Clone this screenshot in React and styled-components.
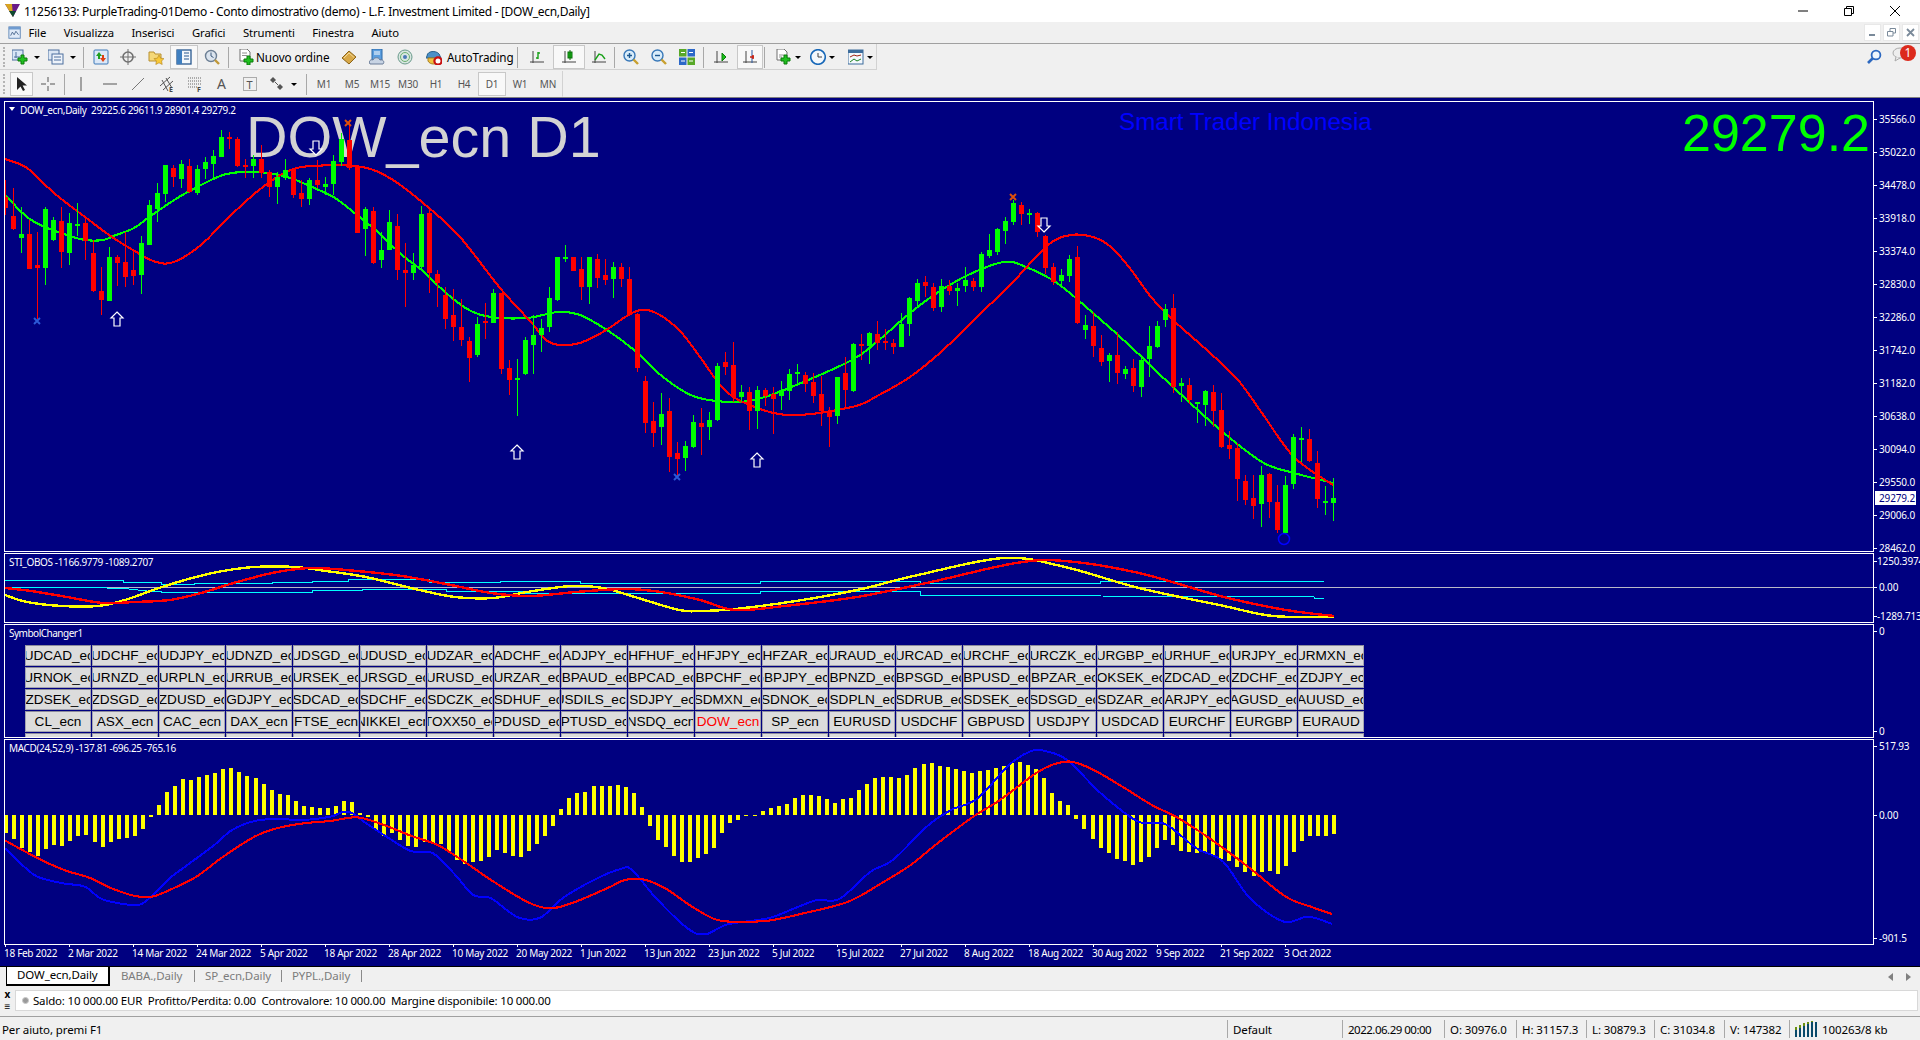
import React from 'react';
import styled, { createGlobalStyle } from 'styled-components';

const UI_FONT = '"Noto Sans", "Liberation Sans", sans-serif';
const NAVY = '#000080';

const GlobalStyle = createGlobalStyle`
  html, body { margin: 0; padding: 0; background: #f0f0f0; overflow: hidden; }
  body { font-family: ${UI_FONT}; font-size: 11px; color: #000; }
  * { box-sizing: border-box; }
`;

const Page = styled.div`
  width: 1920px;
  height: 1040px;
  display: flex;
  flex-direction: column;
  overflow: hidden;
`;

/* ---------- window chrome ---------- */

const TitleBar = styled.div`
  height: 22px;
  flex: none;
  background: #fff;
  display: flex;
  align-items: center;
  padding-left: 5px;
`;

const TitleText = styled.span`
  font-size: 12px;
  margin-left: 3px;
  white-space: nowrap;
  letter-spacing: -0.32px;
`;

const WindowButtons = styled.div`
  margin-left: auto;
  margin-right: 2px;
  display: flex;
  align-items: center;
  height: 100%;
`;

const WindowButton = styled.div`
  width: 46px;
  height: 100%;
  display: flex;
  align-items: center;
  justify-content: center;
`;

const MenuBar = styled.div`
  height: 22px;
  flex: none;
  display: flex;
  align-items: center;
  gap: 17.5px;
  padding-left: 8px;
  border-bottom: 1px solid #a0a0a0;
  background: #f0f0f0;
`;

const MenuIcon = styled.div`
  width: 14px;
  margin-right: -11px;
  display: flex;
`;

const MenuItem = styled.span`
  font-size: 11.3px;
  letter-spacing: -0.1px;
`;

const MdiButtons = styled.div`
  margin-left: auto;
  margin-right: 1px;
  display: flex;
  gap: 2px;
`;

const MdiButton = styled.div`
  width: 17px;
  height: 17px;
  background: #fff;
  border: 1px solid #e8e8e8;
  display: flex;
  align-items: center;
  justify-content: center;
`;

const ToolRow = styled.div`
  height: 27px;
  flex: none;
  display: flex;
  align-items: center;
  background: #f0f0f0;
  border-bottom: 1px solid ${p => p.$last ? '#808080' : 'transparent'};
`;

const ToolGroup = styled.div`
  height: 100%;
  display: flex;
  align-items: center;
  padding-top: 1px;
  border-right: 1px solid #d2d2d2;
  border-bottom: 1px solid ${p => p.$last ? 'transparent' : '#d2d2d2'};
`;

const Grip = styled.div`
  width: ${p => p.$w}px;
  height: 20px;
  flex: none;
  position: relative;
  &::before {
    content: '';
    position: absolute;
    left: 3px;
    top: 0;
    bottom: 0;
    border-left: 2px dotted #b4b4b4;
  }
`;

const ToolButton = styled.div`
  width: ${p => p.$w || 28}px;
  height: 24px;
  flex: none;
  display: flex;
  align-items: center;
  justify-content: ${p => p.$start ? 'flex-start' : 'center'};
  gap: ${p => p.$gap || 0}px;
  padding-left: ${p => p.$start ? p.$start : 0}px;
  border: 1px solid ${p => p.$active ? '#c8c8c8' : 'transparent'};
  background: ${p => p.$active ? '#f8f8f8' : 'transparent'};
  font-size: 11.7px;
  letter-spacing: -0.1px;
  white-space: nowrap;
`;

const ToolSep = styled.div`
  width: 1px;
  height: 21px;
  flex: none;
  background: #a8a8a8;
  margin: 0 ${p => p.$m ?? 2}px;
`;

const Caret = styled.span`
  width: 0;
  height: 0;
  flex: none;
  border-left: 3px solid transparent;
  border-right: 3px solid transparent;
  border-top: 3px solid #000;
  margin-left: ${p => p.$m || 6}px;
`;

const TimeframeLabel = styled.span`
  font-size: 10px;
  color: #555;
  letter-spacing: -0.2px;
`;

const RowEnd = styled.div`
  margin-left: auto;
  display: flex;
  align-items: center;
  gap: 10px;
  padding-right: 4px;
`;

const Bubble = styled.div`
  position: relative;
  width: 24px;
  height: 20px;
`;

const Badge = styled.span`
  position: absolute;
  right: 0;
  top: -2px;
  width: 16px;
  height: 16px;
  border-radius: 50%;
  background: #dc2a1c;
  color: #fff;
  font-size: 12px;
  line-height: 16px;
  text-align: center;
`;

/* ---------- chart ---------- */

const ChartArea = styled.div`
  height: 868px;
  flex: none;
  background: ${NAVY};
  padding: 3px 0 0 4px;
  color: #fff;
  font-family: "Noto Sans", sans-serif;
  font-size: 10px;
`;

const PaneRow = styled.div`
  display: flex;
  height: ${p => p.$h}px;
  margin-bottom: ${p => p.$gap ?? 1}px;
`;

const Pane = styled.div`
  width: 1870px;
  flex: none;
  height: 100%;
  position: relative;
  border: 1px solid #fff;
  overflow: hidden;
`;

const PlotSvg = styled.svg`
  position: absolute;
  inset: 0;
  width: 100%;
  height: 100%;
  display: block;
`;

const Legend = styled.div`
  position: absolute;
  left: ${p => p.$left || 4}px;
  top: 1px;
  line-height: 14px;
  white-space: pre;
  letter-spacing: -0.36px;
  z-index: 2;
`;

const LegendCaret = styled.span`
  position: absolute;
  left: 4px;
  top: 5px;
  width: 0;
  height: 0;
  border-left: 3px solid transparent;
  border-right: 3px solid transparent;
  border-top: 4px solid #fff;
  z-index: 2;
`;

const BigSymbol = styled.div`
  position: absolute;
  left: 241px;
  top: 3px;
  font-family: "Liberation Sans", Arial, sans-serif;
  font-size: 57.5px;
  line-height: 64px;
  color: #d3d3d3;
  white-space: nowrap;
`;

const Watermark = styled.div`
  position: absolute;
  left: 1114px;
  top: 6px;
  font-family: "Liberation Sans", Arial, sans-serif;
  font-size: 24.2px;
  line-height: 28px;
  color: #0000ff;
  white-space: nowrap;
`;

const BigPrice = styled.div`
  position: absolute;
  right: 3px;
  top: 1px;
  font-family: "Liberation Sans", Arial, sans-serif;
  font-size: 52px;
  line-height: 60px;
  color: #00ff00;
`;

const Axis = styled.div`
  flex: 1;
  min-width: 0;
  position: relative;
  overflow: hidden;
  padding-top: ${p => p.$pad || 0}px;
  display: flex;
  flex-direction: column;
`;

const AxisTick = styled.div`
  height: 14px;
  flex: none;
  line-height: 14px;
  padding-left: ${p => p.$indent ?? 5}px;
  margin-top: ${p => p.$gap || 0}px;
  position: relative;
  white-space: nowrap;
  letter-spacing: -0.15px;
  &::before {
    content: '';
    position: absolute;
    left: 0;
    top: 7px;
    width: 3px;
    height: 1px;
    background: #fff;
  }
`;

const PriceTag = styled.div`
  position: absolute;
  left: 1px;
  top: 390px;
  width: 41px;
  height: 14px;
  background: #fff;
  color: ${NAVY};
  line-height: 14px;
  padding-left: 4px;
  letter-spacing: -0.15px;
`;

const SymbolPane = styled(Pane)`
  padding-left: 20px;
`;

const PaneCaption = styled.div`
  height: 20px;
  line-height: 16px;
  margin-left: -16px;
  letter-spacing: -0.5px;
`;

const SymbolGrid = styled.div`
  display: grid;
  grid-template-columns: repeat(20, 66px);
  grid-auto-rows: 21px;
  gap: 1px;
`;

const SymbolButton = styled.div`
  background: #dcdcdc;
  border: 1px solid #a4a4b0;
  border-top-color: #8c8c9c;
  color: ${p => p.$current ? '#ff0000' : '#000'};
  font-family: "Liberation Sans", Arial, sans-serif;
  font-size: 13.6px;
  display: flex;
  align-items: center;
  justify-content: center;
  white-space: nowrap;
  overflow: hidden;
`;

const TimeAxis = styled.div`
  height: 21px;
  display: flex;
  letter-spacing: -0.3px;
`;

const TimeLabel = styled.div`
  width: 64px;
  flex: none;
  position: relative;
  padding-top: 1px;
  line-height: 14px;
  white-space: nowrap;
  &::before {
    content: '';
    position: absolute;
    left: 1px;
    top: -1px;
    width: 1px;
    height: 3px;
    background: #fff;
  }
`;

/* ---------- bottom bars ---------- */

const TabBar = styled.div`
  height: 20px;
  flex: none;
  display: flex;
  align-items: stretch;
  border-top: 1px solid #000;
  padding-left: 6px;
`;

const Tab = styled.div`
  display: flex;
  align-items: center;
  width: ${p => p.$w}px;
  padding-left: ${p => p.$pad}px;
  padding-bottom: 2px;
  font-size: 11.5px;
  letter-spacing: -0.1px;
  color: ${p => p.$active ? '#000' : '#7c7c7c'};
  background: ${p => p.$active ? '#fff' : 'transparent'};
  ${p => p.$active
    ? 'border: 1px solid #000; border-top: none; border-right-width: 2px; border-bottom-width: 2px;'
    : ''}
  &:not(:first-child) { position: relative; }
  ${p => p.$active ? '' : `&::after {
    content: '';
    position: absolute;
    right: 0;
    top: 3px;
    bottom: 4px;
    width: 1px;
    background: #8a8a8a;
  }`}
`;

const TabArrows = styled.div`
  margin-left: auto;
  display: flex;
  align-items: center;
  gap: 13px;
  padding-right: 9px;
`;

const TradeBar = styled.div`
  height: 31px;
  flex: none;
  display: flex;
  align-items: center;
  padding: 0 2px 2px 0;
  border-bottom: 1px solid #a0a0a0;
`;

const TradeHandle = styled.div`
  width: 15px;
  flex: none;
  text-align: center;
  font-size: 10px;
  font-weight: 700;
  line-height: 12px;
`;

const TradeBox = styled.div`
  flex: 1;
  height: 21px;
  background: #fff;
  border: 1px solid #d8d8d8;
  display: flex;
  align-items: center;
  gap: 4px;
  padding-left: 6px;
  font-size: 11.5px;
  letter-spacing: -0.19px;
  white-space: pre;
`;

const TradeDot = styled.span`
  width: 7px;
  height: 7px;
  border-radius: 50%;
  background: #9a9a9a;
  border: 1px solid #c8c8c8;
`;

const StatusBar = styled.div`
  flex: 1;
  display: flex;
  align-items: stretch;
  padding: 3px 0 2px 2px;
  font-size: 11.5px;
  letter-spacing: -0.1px;
`;

const StatusHelp = styled.div`
  margin-right: auto;
  display: flex;
  align-items: center;
`;

const StatusCell = styled.div`
  width: ${p => p.$w}px;
  flex: none;
  display: flex;
  align-items: center;
  gap: 4px;
  padding-left: 5px;
  border-left: 1px solid #a8a8a8;
  white-space: nowrap;
  letter-spacing: ${p => p.$tight ? '-0.5px' : 'inherit'};
`;

const Glyph = styled.svg`
  display: block;
  flex: none;
`;

/* ---------- chart data (read off the picture) ---------- */

// [colour, wick top, body top, body bottom, wick bottom] in 1/3 px from a reference row
const CANDLES_A = [
  ['r',240,290,325,345],['r',265,348,387,390],['g',320,402,413,458],['r',360,402,507,508],['r',395,496,503,655],
  ['g',322,328,503,555],['g',350,360,420,422],['r',322,364,456,505],['g',340,370,458,495],['g',310,372,375,408],
  ['r',358,368,422,480],['r',420,460,573,575],['r',500,574,600,645],['g',440,472,603,603],['r',465,472,488,558],
  ['r',395,487,530,560],['r',455,510,527,555],['g',408,430,524,582],['g',300,316,434,435],['g',250,280,326,368],
  ['g',195,196,282,305],['r',195,204,230,260],['g',180,192,236,265],['r',178,198,276,280],['g',195,208,280,285],
  ['g',170,186,206,235],['g',150,168,192,235],['g',90,111,170,170],['r',95,112,118,145],['r',110,118,197,200],
  ['r',178,195,200,235],['g',165,178,198,235],['r',135,178,218,235],['r',210,216,260,292],['g',215,232,260,310],
  ['g',178,210,235,240],['r',205,208,285,295],['r',240,280,297,320],['g',235,240,297,315],['r',180,240,255,265],
  ['g',230,252,262,285],['g',165,184,252,285],['g',100,118,186,200],['r',60,120,205,210],['r',198,198,398,400],
  ['g',322,328,388,468],['r',320,334,490,490],['g',395,450,480,502],['g',330,366,450,450],['r',342,378,510,540],
  ['r',430,510,518,622],['g',460,495,518,542],['g',318,342,502,510],['r',325,340,518,580],['r',510,522,550,620],
  ['r',560,585,656,685],['r',568,646,680,725],['r',598,682,720,740],['r',710,724,773,845],['g',650,672,765,770],
  ['r',610,663,668,718],['g',568,580,668,668],['r',578,578,806,820],['r',780,805,840,885],['g',778,834,838,950],
  ['g',710,720,822,825],['g',645,706,735,822],['g',657,684,705,755],['g',562,595,680,698],['g',472,472,600,605],
  ['g',435,471,476,485],['r',470,472,512,512],['r',470,508,560,600],['g',472,472,560,612],['r',462,476,535,565],
  ['r',478,526,540,555],['g',485,502,536,592],['r',490,502,536,562],['r',502,538,645,648],['r',640,642,803,818],
  ['r',828,844,968,998],['r',906,963,999,1041],['g',879,942,981,1035],['r',894,933,1071,1116],
];

const CANDLES_B = [
  ['r',786,819,837,891],['g',783,798,834,873],['g',705,726,801,804],['r',685,730,740,825],['g',695,720,740,780],
  ['g',550,558,720,725],['r',517,545,560,585],['r',485,555,650,665],['g',615,636,652,665],['r',620,636,692,750],
  ['g',618,630,692,748],['r',625,630,648,680],['r',620,642,656,762],['g',603,630,648,690],['g',568,582,632,662],
  ['g',552,576,583,612],['r',576,586,612,635],['r',580,606,648,670],['r',588,642,692,738],['r',682,695,710,803],
  ['g',590,592,708,730],['r',530,580,630,680],['g',488,492,633,635],['r',462,491,497,540],['g',455,458,498,550],
  ['r',424,462,488,512],['r',448,484,487,512],['r',478,490,500,522],['g',400,432,502,502],['g',350,354,432,468],
  ['g',297,309,363,378],['r',288,306,318,350],['r',310,321,384,395],['g',297,318,382,395],['r',300,318,333,345],
  ['g',310,324,332,378],['g',262,300,318,338],['r',295,303,321,335],['g',216,222,321,335],['g',162,210,228,235],
  ['g',145,147,216,225],['g',110,123,153,192],['g',60,69,126,135],['r',66,75,102,135],['g',88,99,105,132],
  ['r',96,99,156,170],['r',165,168,264,282],['r',250,261,305,315],['g',268,285,303,320],['g',225,237,288,305],
  ['r',198,231,429,432],['g',405,435,450,476],['r',396,438,498,530],['r',465,504,546,558],['g',520,525,543,606],
  ['r',456,525,579,612],['g',558,567,582,596],['r',538,564,618,636],['g',528,540,621,650],['g',438,498,537,590],
  ['g',423,438,501,505],['g',372,387,420,440],['r',342,384,621,640],['g',595,609,618,668],['r',594,615,660,672],
  ['g',666,666,670,728],['g',630,633,675,738],['r',615,636,693,742],['r',640,690,801,806],['r',752,796,808,835],
  ['r',790,804,897,965],['r',885,903,960,975],['r',885,954,978,1018],['g',858,885,972,1040],['r',878,882,966,1012],
  ['r',915,966,1050,1060],['g',888,915,1060,1062],['g',762,771,912,926],['g',741,774,777,845],['r',748,777,843,848],
  ['r',813,849,957,984],['g',918,964,968,1005],['g',895,954,968,1025],
];

const toCandle = base => ([c, a, b, d, e]) => [c, base + a / 3, base + b / 3, base + d / 3, base + e / 3];
const CANDLES = [...CANDLES_A.map(toCandle(100)), ...CANDLES_B.map(toCandle(180))];

const MA_FAST = [
  [5,195],[27,217],[45,227],[67,235],[85,240],[103,240],[116,235],[134,228],[152,215],[179,197],[201,185],[223,175],
  [243,172],[268,173],[290,178],[312,187],[335,198],[357,215],[379,233],[402,255],[424,272],[446,293],[469,310],
  [491,317],[527,318],[558,312],[580,315],[607,330],[634,350],[663,377],[693,396],[727,402],[754,400],[789,388],
  [852,360],[879,340],[910,313],[937,293],[968,275],[1004,262],[1026,267],[1057,283],[1093,313],[1129,345],
  [1173,387],[1218,428],[1262,462],[1294,473],[1333,483],
];

const MA_SLOW = [
  [5,159],[27,168],[54,193],[85,217],[112,237],[138,253],[156,262],[174,262],[201,245],[228,218],[259,190],[286,172],
  [312,166],[362,167],[393,180],[429,208],[460,237],[500,288],[531,322],[549,342],[576,344],[603,332],[634,312],
  [654,312],[679,330],[700,357],[722,387],[745,403],[789,415],[852,407],[879,395],[910,377],[941,352],[977,317],
  [1012,283],[1048,245],[1071,235],[1093,237],[1111,247],[1129,267],[1151,297],[1173,320],[1209,352],[1238,380],
  [1262,413],[1294,457],[1333,485],
];

const STI_FAST = [
  [5,595],[27,602],[62,606],[98,606],[125,600],[156,589],[192,578],[223,571],[254,567],[295,567],[326,571],[366,577],
  [415,589],[455,597],[493,598],[527,592],[571,586],[603,588],[638,598],[679,610],[700,611],[735,609],[796,601],
  [857,590],[918,575],[1004,558],[1065,567],[1139,588],[1224,606],[1273,616],[1334,617],
];

const STI_SLOW = [
  [5,588],[31,591],[67,597],[103,603],[134,602],[170,600],[201,593],[237,582],[277,572],[312,568],[357,571],[402,576],
  [446,584],[491,593],[531,596],[576,592],[625,589],[661,592],[700,600],[735,610],[784,606],[857,597],[931,582],
  [1016,563],[1065,561],[1139,573],[1224,597],[1286,610],[1334,616],
];

const STI_BAND_HIGH = '5,580 123,580 123,582 161,582 161,584 194,584 194,583 272,583 272,582 312,582 312,581 348,581 348,579 429,579 429,582 500,582 500,581 580,581 580,583 760,583 760,581 920,581 920,583 1100,583 1100,581 1324,581';
const STI_BAND_LOW = '5,587 83,587 107,588 120,588 147,591 161,591 161,592 312,592 312,590 362,590 362,589 446,589 446,591 522,591 522,593 760,593 760,591 920,591 920,595 1100,595 1100,596 1314,597 1314,598 1324,598';

// MACD histogram tips, 1/3 px below y=745; zero line is at 210
const MACD_BARS = [
  265,283,310,320,332,312,300,303,287,272,270,292,306,292,282,280,272,252,215,180,140,122,102,105,95,90,85,72,69,82,92,
  100,116,135,147,150,168,183,185,188,190,182,168,170,205,215,255,272,265,285,302,305,290,295,297,320,345,358,352,348,
  335,315,325,332,335,318,297,272,243,193,160,143,140,122,122,122,120,125,143,185,243,285,305,332,352,352,340,327,308,
  265,235,225,212,212,197,188,183,177,160,150,149,153,162,175,162,160,135,116,100,96,96,98,90,70,58,55,62,65,72,78,85,
  78,76,70,62,55,52,60,72,100,145,168,180,222,252,282,308,325,342,348,360,352,335,310,285,300,317,320,323,325,330,342,
  348,365,380,392,380,378,387,363,322,288,272,272,272,268,
];

const MACD_SIGNAL = [
  [6,287],[25,315],[50,350],[75,378],[100,398],[125,430],[150,452],[170,455],[190,435],[220,395],[250,335],[285,275],
  [310,250],[340,235],[370,228],[400,217],[430,240],[460,272],[490,300],[520,350],[550,405],[590,470],[615,490],
  [640,475],[680,430],[700,405],[720,403],[745,430],[775,485],[800,522],[820,530],[860,527],[900,505],[950,470],
  [990,410],[1020,360],[1050,295],[1090,215],[1120,165],[1160,85],[1180,58],[1200,50],[1225,75],[1260,130],[1290,180],
  [1320,220],[1360,290],[1400,370],[1440,455],[1470,487],[1492,507],
];

const MACD_MAIN = [
  [6,310],[25,360],[42,395],[70,415],[95,425],[115,463],[150,480],[165,465],[190,400],[210,360],[240,300],[260,255],
  [285,228],[310,222],[340,225],[370,215],[385,200],[395,205],[410,235],[430,270],[460,318],[485,325],[510,390],
  [530,450],[550,460],[580,517],[605,518],[630,460],[665,405],[695,372],[708,375],[735,460],[770,550],[790,568],
  [815,538],[860,520],[890,490],[915,465],[940,462],[975,380],[1000,345],[1040,240],[1065,195],[1095,160],[1130,60],
  [1155,18],[1170,18],[1195,45],[1235,150],[1275,230],[1305,237],[1340,310],[1370,350],[1400,460],[1438,530],
  [1465,515],[1492,537],
];

const macdPoint = ([x, y]) => [x / 1.12, 745 + y / 3];

const PRICE_TICKS = ['35566.0','35022.0','34478.0','33918.0','33374.0','32830.0','32286.0','31742.0','31182.0','30638.0','30094.0','29550.0','29006.0','28462.0'];

const DATES = ['18 Feb 2022','2 Mar 2022','14 Mar 2022','24 Mar 2022','5 Apr 2022','18 Apr 2022','28 Apr 2022','10 May 2022','20 May 2022','1 Jun 2022','13 Jun 2022','23 Jun 2022','5 Jul 2022','15 Jul 2022','27 Jul 2022','8 Aug 2022','18 Aug 2022','30 Aug 2022','9 Sep 2022','21 Sep 2022','3 Oct 2022'];

const withEcn = list => list.split(' ').map(s => `${s}_ecn`);
const SYMBOLS = [
  ...withEcn('AUDCAD AUDCHF AUDJPY AUDNZD AUDSGD AUDUSD AUDZAR CADCHF CADJPY CHFHUF CHFJPY CHFZAR EURAUD EURCAD EURCHF EURCZK EURGBP EURHUF EURJPY EURMXN'),
  ...withEcn('EURNOK EURNZD EURPLN EURRUB EURSEK EURSGD EURUSD EURZAR GBPAUD GBPCAD GBPCHF GBPJPY GBPNZD GBPSGD GBPUSD GBPZAR NOKSEK NZDCAD NZDCHF NZDJPY'),
  ...withEcn('NZDSEK NZDSGD NZDUSD SGDJPY USDCAD USDCHF USDCZK USDHUF USDILS USDJPY USDMXN USDNOK USDPLN USDRUB USDSEK USDSGD USDZAR ZARJPY XAGUSD XAUUSD'),
  ...withEcn('CL ASX CAC DAX FTSE NIKKEI STOXX50 XPDUSD XPTUSD NSDQ DOW SP'),
  'EURUSD','USDCHF','GBPUSD','USDJPY','USDCAD','EURCHF','EURGBP','EURAUD',
  ...Array(20).fill(''),
];

// smooth path through points (Catmull-Rom)
function smooth(points) {
  let d = `M${points[0][0]} ${points[0][1]}`;
  for (let i = 0; i < points.length - 1; i++) {
    const p0 = points[i - 1] || points[i];
    const p1 = points[i];
    const p2 = points[i + 1];
    const p3 = points[i + 2] || p2;
    const c1x = p1[0] + (p2[0] - p0[0]) / 6;
    const c1y = p1[1] + (p2[1] - p0[1]) / 6;
    const c2x = p2[0] - (p3[0] - p1[0]) / 6;
    const c2y = p2[1] - (p3[1] - p1[1]) / 6;
    d += `C${c1x.toFixed(1)} ${c1y.toFixed(1)} ${c2x.toFixed(1)} ${c2y.toFixed(1)} ${p2[0].toFixed(1)} ${p2[1].toFixed(1)}`;
  }
  return d;
}

const Curve = ({ points, color, width = 2.1 }) => (
  <path d={smooth(points)} fill="none" stroke={color} strokeWidth={width} shapeRendering="crispEdges" />
);

const Arrow = ({ x, y, down }) => (
  <path
    transform={`translate(${x} ${y})${down ? ' scale(1 -1)' : ''}`}
    d="M0 -7L6 -1H3V7H-3V-1H-6Z"
    fill={NAVY}
    stroke="#fff"
    strokeWidth="1.2"
  />
);

const Cross = ({ x, y, color }) => (
  <path d={`M${x - 3} ${y - 3}L${x + 3} ${y + 3}M${x + 3} ${y - 3}L${x - 3} ${y + 3}`} stroke={color} strokeWidth="1.9" fill="none" />
);

const PriceChart = () => (
  <PlotSvg viewBox="5 102 1868 449">
    <Curve points={MA_FAST} color="#00ff00" />
    <Curve points={MA_SLOW} color="#ff0000" />
    {CANDLES.map(([c, a, b, d, e], k) => {
      const color = c === 'g' ? '#00ff00' : '#ff0000';
      const top = Math.round(b);
      return (
        <g key={k} fill={color} shapeRendering="crispEdges">
          <rect x={5 + k * 8} y={Math.round(a)} width="1" height={Math.max(1, Math.round(e - a))} />
          <rect x={3 + k * 8} y={top} width="5" height={Math.max(2, Math.round(d) - top)} />
        </g>
      );
    })}
    <Arrow x={117} y={319} />
    <Arrow x={517} y={452} />
    <Arrow x={757} y={460} />
    <Arrow x={1044} y={225} down />
    <Arrow x={316} y={148} down />
    <Cross x={37} y={321} color="#2c5ad8" />
    <Cross x={677} y={477} color="#2c5ad8" />
    <Cross x={1013} y={197} color="#e0500a" />
    <Cross x={348} y={123} color="#e0500a" />
    <circle cx={1284} cy={539} r="5.5" fill="none" stroke="#0000ff" strokeWidth="1.5" />
  </PlotSvg>
);

const StiChart = () => (
  <PlotSvg viewBox="5 554 1868 68">
    <rect x="5" y="587" width="1868" height="1" fill="#b8b8c8" />
    <polyline points={STI_BAND_HIGH} fill="none" stroke="#00ffff" strokeWidth="1" shapeRendering="crispEdges" />
    <polyline points={STI_BAND_LOW} fill="none" stroke="#00ffff" strokeWidth="1" shapeRendering="crispEdges" />
    <Curve points={STI_FAST} color="#ffff00" width={2.4} />
    <Curve points={STI_SLOW} color="#ff0000" width={2.4} />
  </PlotSvg>
);

const MacdChart = () => (
  <PlotSvg viewBox="5 740 1868 204">
    {MACD_BARS.map((tip, k) => {
      const y = 745 + tip / 3;
      const x = Math.round(4 + k * (1328 / (MACD_BARS.length - 1)));
      return <rect key={k} x={x} y={Math.min(y, 815)} width="4" height={Math.max(1, Math.abs(y - 815))} fill="#ffff00" shapeRendering="crispEdges" />;
    })}
    <Curve points={MACD_MAIN.map(macdPoint)} color="#0000ff" width={2} />
    <Curve points={MACD_SIGNAL.map(macdPoint)} color="#ff0000" />
  </PlotSvg>
);

/* ---------- toolbar icons ---------- */

const Axes = () => <path d="M4 2V14M1 13H15" stroke="#444" fill="none" />;

const icons = {
  appLogo: <><path d="M0 1H15L8 14Z" fill="#6a1b8a" /><path d="M0 1H7L8 14Z" fill="#d9a520" /><path d="M4 8L8 14L11 8Z" fill="#0e4a30" /></>,
  menuDoc: <><rect x="1" y="1" width="13" height="13" fill="#dfeaf8" stroke="#5b83b5" /><rect x="1" y="1" width="13" height="3" fill="#6f9bd0" /><path d="M3 11L5 7L7 10L9 6L12 10" stroke="#45628a" fill="none" /></>,
  chartPlus: <><rect x="0" y="1" width="11" height="10" fill="#d8e6f6" stroke="#4c6f9e" /><path d="M2 8H8M4 3V9" stroke="#4c6f9e" /><path d="M9 6H12V9H15V12H12V15H9V12H6V9H9Z" fill="#20c020" stroke="#0a7a0a" /></>,
  profiles: <><rect x="0" y="1" width="11" height="10" fill="#dbe6f4" stroke="#4c6f9e" /><rect x="4" y="5" width="11" height="10" fill="#eef3fa" stroke="#4c6f9e" /><path d="M6 8H13M6 11H13" stroke="#4c6f9e" /></>,
  market: <><rect x="1" y="1" width="14" height="14" rx="1" fill="#dbe8f8" stroke="#3c78b8" /><path d="M6 3L9 7H7V10H5V7H3Z" fill="#20a020" /><path d="M10 13L7 9H9V6H11V9H13Z" fill="#e04010" /></>,
  crosshair: <><circle cx="8" cy="8" r="5" fill="none" stroke="#707070" strokeWidth="1.6" /><path d="M8 0V16M0 8H16" stroke="#707070" /></>,
  favorites: <><path d="M1 3H6L7 5H13V12H1Z" fill="#f5d878" stroke="#b89030" /><path d="M11 6L12.6 9.2L16 9.6L13.6 12L14.2 15.5L11 13.8L7.8 15.5L8.4 12L6 9.6L9.4 9.2Z" fill="#f8c838" stroke="#b08018" strokeWidth=".6" /></>,
  panel: <><rect x="1" y="1" width="14" height="14" fill="#f4f8fc" stroke="#28588f" strokeWidth="1.3" /><rect x="1" y="1" width="5" height="14" fill="#3f7fc0" /><path d="M8 4H13M8 7H13M8 10H13" stroke="#28588f" /></>,
  tester: <><circle cx="7" cy="7" r="5.5" fill="#dbe4ee" stroke="#6c7f94" strokeWidth="1.4" /><path d="M7 3.5V7L9.5 8.5" stroke="#3c5a7c" fill="none" /><path d="M11 11L15 15" stroke="#c09838" strokeWidth="2.4" /></>,
  newOrder: <><path d="M2 0H9L12 3V12H2Z" fill="#fff" stroke="#707070" /><path d="M4 4H9M4 6.5H9" stroke="#909090" /><path d="M9 7H12V10H15V13H12V16H9V13H6V10H9Z" fill="#20c020" stroke="#0a7a0a" /></>,
  book: <><path d="M1 9L8 2L15 8L8 15Z" fill="#d8a848" stroke="#8c6418" /><path d="M3 9L8 4L13 8.4" stroke="#f0d898" fill="none" /></>,
  cloudDoc: <><rect x="3" y="0" width="10" height="11" fill="#5c9ede" stroke="#2a68a8" /><path d="M5 3H11M5 5H11" stroke="#fff" /><path d="M1 15C-1 12 2 10 4 11C5 8 10 8 11 11C14 10 16 13 14 15Z" fill="#c8d4e4" stroke="#6a7c98" /></>,
  signal: <><circle cx="8" cy="8" r="7" fill="#d8e6e0" stroke="#6a9a8c" /><circle cx="8" cy="8" r="4.5" fill="none" stroke="#6ab070" /><circle cx="8" cy="8" r="2" fill="#4a78b8" /></>,
  autoTrade: <><path d="M1 7C1 1 13 1 14 7L15 9H0Z" fill="#4a90c8" stroke="#28608c" /><path d="M2 9H13V12C11 16 4 16 2 12Z" fill="#f0c040" stroke="#a88020" /><circle cx="12" cy="12" r="3.6" fill="#fff" stroke="#c81010" strokeWidth="2.2" /></>,
  bars: <><Axes /><path d="M9 3V10M7 9H9M9 4H11" stroke="#18a018" fill="none" strokeWidth="1.4" /></>,
  candles: <><Axes /><rect x="7" y="3" width="4" height="6" fill="#18c018" stroke="#0a6a0a" /><path d="M9 1V11" stroke="#0a6a0a" /></>,
  line: <><Axes /><path d="M4 11L8 5L11 6L14 10" stroke="#18a018" fill="none" strokeWidth="1.4" /></>,
  zoomIn: <><circle cx="6.5" cy="6.5" r="5.5" fill="#d8ecfa" stroke="#3878b8" strokeWidth="1.4" /><path d="M4 6.5H9M6.5 4V9" stroke="#1c5890" strokeWidth="1.4" /><path d="M10.5 10.5L15 15" stroke="#c8a030" strokeWidth="2.4" /></>,
  zoomOut: <><circle cx="6.5" cy="6.5" r="5.5" fill="#d8ecfa" stroke="#3878b8" strokeWidth="1.4" /><path d="M4 6.5H9" stroke="#1c5890" strokeWidth="1.4" /><path d="M10.5 10.5L15 15" stroke="#c8a030" strokeWidth="2.4" /></>,
  tile: <><rect x="0" y="0" width="7.5" height="7.5" fill="#58a828" /><rect x="8.5" y="0" width="7.5" height="7.5" fill="#2c68c8" /><rect x="0" y="8.5" width="7.5" height="7.5" fill="#2c68c8" /><rect x="8.5" y="8.5" width="7.5" height="7.5" fill="#58a828" /><path d="M2 3.5H6M10 3.5H14M2 12H6M10 12H14" stroke="#fff" /></>,
  scroll: <><Axes /><path d="M9 4L13 8L9 12Z" fill="#18c018" stroke="#0a7a0a" /></>,
  shift: <><Axes /><path d="M10 1V14" stroke="#2858a0" /><path d="M12 8H8M11 6V10" stroke="#c82010" strokeWidth="1.6" /></>,
  addInd: <><path d="M1 0H8L11 3V11H1Z" fill="#fff" stroke="#707070" /><path d="M3 6H8M3 8H6" stroke="#909090" /><path d="M8 6H11V9H14V12H11V15H8V12H5V9H8Z" fill="#20c020" stroke="#0a7a0a" /></>,
  clock: <><circle cx="8" cy="8" r="7.3" fill="#f4f8fc" stroke="#1868b8" strokeWidth="1.6" /><path d="M8 4V8H12" stroke="#404040" fill="none" /></>,
  template: <><rect x="0" y="1" width="15" height="14" fill="#f4f8fc" stroke="#3c6c9c" /><rect x="0" y="1" width="15" height="3" fill="#3c6c9c" /><path d="M2 8L6 6L9 7L13 6" stroke="#a02010" fill="none" /><path d="M2 13L6 10L9 12L13 10" stroke="#188020" fill="none" /></>,
  search: <><circle cx="10" cy="6" r="4.4" fill="#eef5fc" stroke="#2c68c0" strokeWidth="1.8" /><path d="M7 9L2 14" stroke="#2c68c0" strokeWidth="2.6" /></>,
  chat: <><ellipse cx="8" cy="6" rx="7" ry="5" fill="#eee" stroke="#aaa" /><path d="M4 10L3 14L8 11" fill="#eee" stroke="#aaa" /></>,
  cursor: <path d="M3 1V14L6.5 10.5L9 15L11 14L8.6 9.6H13Z" fill="#222" />,
  cross: <path d="M8 1V6M8 10V15M1 8H6M10 8H15" stroke="#555" />,
  vline: <path d="M8 1V15" stroke="#555" />,
  hline: <path d="M1 8H15" stroke="#555" />,
  trend: <path d="M2 14L14 2" stroke="#777" />,
  channel: <><path d="M1 10L11 1M4 14L14 5M3 4L9 15M7 2L13 12" stroke="#555" /><text x="10" y="16" fontSize="7" fontWeight="700" fill="#444">E</text></>,
  fibo: <><path d="M1 2H14M1 5H14M1 8H14M1 11H11" stroke="#666" strokeDasharray="1 1" /><text x="10" y="16" fontSize="7" fontWeight="700" fill="#444">F</text></>,
  labelA: <text x="3" y="13" fontSize="14" fill="#555">A</text>,
  labelT: <><rect x="1.5" y="1.5" width="13" height="13" fill="none" stroke="#666" strokeDasharray="1 1" /><text x="4.5" y="12.5" fontSize="11" fill="#555">T</text></>,
  arrows: <><path d="M4 1L7 4L4 7L1 4Z" fill="#555" /><path d="M11 8L14 11L11 14L8 11Z" fill="#555" /><path d="M6 6L9 9" stroke="#555" /></>,
  barsStatus: <><path d="M1 9V16M5 7V16M9 5V16M13 3V16M17 1V16M21 1V16" stroke="#0a4a6a" strokeWidth="2" /><path d="M1 6V9M5 4V7M9 2V5M13 1V3M17 0V1" stroke="#6a9010" strokeWidth="2" /></>,
};

const Icon = ({ name, size = 16, w }) => (
  <Glyph width={w || size} height={size} viewBox={w ? `0 0 ${w} ${size}` : '0 0 16 16'}>{icons[name]}</Glyph>
);

const timeframes = ['M1', 'M5', 'M15', 'M30', 'H1', 'H4', 'D1', 'W1', 'MN'];
const drawTools = [['cross', 30], null, ['vline', 30], ['hline', 28], ['trend', 28], ['channel', 29], ['fibo', 27], ['labelA', 27], ['labelT', 29]];

export default function App() {
  return (
    <Page>
      <GlobalStyle />

      <TitleBar>
        <Icon name="appLogo" />
        <TitleText>11256133: PurpleTrading-01Demo - Conto dimostrativo (demo) - L.F. Investment Limited - [DOW_ecn,Daily]</TitleText>
        <WindowButtons>
          <WindowButton><Glyph width="12" height="12" viewBox="0 0 12 12"><path d="M1 6H11" stroke="#000" /></Glyph></WindowButton>
          <WindowButton><Glyph width="12" height="12" viewBox="0 0 12 12"><path d="M1.5 3.5H8.5V10.5H1.5ZM3.5 3V1.5H10.5V8.5H9" fill="none" stroke="#000" /></Glyph></WindowButton>
          <WindowButton><Glyph width="12" height="12" viewBox="0 0 12 12"><path d="M1 1L11 11M11 1L1 11" stroke="#000" /></Glyph></WindowButton>
        </WindowButtons>
      </TitleBar>

      <MenuBar>
        <MenuIcon><Icon name="menuDoc" size={14} /></MenuIcon>
        {['File', 'Visualizza', 'Inserisci', 'Grafici', 'Strumenti', 'Finestra', 'Aiuto'].map(m => (
          <MenuItem key={m}>{m}</MenuItem>
        ))}
        <MdiButtons>
          <MdiButton><Glyph width="9" height="9" viewBox="0 0 9 9"><path d="M1 7H7" stroke="#7a8a9a" strokeWidth="2" /></Glyph></MdiButton>
          <MdiButton><Glyph width="9" height="9" viewBox="0 0 9 9"><path d="M.5 3.5H6V8H.5ZM3 3V.5H8.5V5H6" fill="none" stroke="#7a8a9a" /></Glyph></MdiButton>
          <MdiButton><Glyph width="9" height="9" viewBox="0 0 9 9"><path d="M1 1L8 8M8 1L1 8" stroke="#7a8a9a" strokeWidth="1.8" /></Glyph></MdiButton>
        </MdiButtons>
      </MenuBar>

      <ToolRow>
        <ToolGroup>
          <Grip $w={8} />
          <ToolButton $w={36} $start={3}><Icon name="chartPlus" /><Caret /></ToolButton>
          <ToolButton $w={36} $start={3}><Icon name="profiles" /><Caret /></ToolButton>
          <ToolSep $m={3} />
          <ToolButton $w={27}><Icon name="market" /></ToolButton>
          <ToolButton><Icon name="crosshair" /></ToolButton>
          <ToolButton><Icon name="favorites" /></ToolButton>
          <ToolButton $active><Icon name="panel" /></ToolButton>
          <ToolButton><Icon name="tester" /></ToolButton>
          <ToolSep $m={2} />
          <ToolButton $w={104} $start={6} $gap={2}><Icon name="newOrder" />Nuovo ordine</ToolButton>
          <ToolButton><Icon name="book" /></ToolButton>
          <ToolButton><Icon name="cloudDoc" /></ToolButton>
          <ToolButton><Icon name="signal" /></ToolButton>
          <ToolButton $w={95} $start={6} $gap={5}><Icon name="autoTrade" />AutoTrading</ToolButton>
          <ToolSep $m={3} />
          <ToolButton $w={32}><Icon name="bars" /></ToolButton>
          <ToolButton $w={32} $active><Icon name="candles" /></ToolButton>
          <ToolButton $w={28}><Icon name="line" /></ToolButton>
          <ToolSep $m={1} />
          <ToolButton $w={30}><Icon name="zoomIn" /></ToolButton>
          <ToolButton $w={26}><Icon name="zoomOut" /></ToolButton>
          <ToolButton $w={30}><Icon name="tile" /></ToolButton>
          <ToolSep $m={1} />
          <ToolButton $w={32}><Icon name="scroll" /></ToolButton>
          <ToolButton $w={26} $active><Icon name="shift" /></ToolButton>
          <ToolSep $m={1} />
          <ToolButton $w={36} $start={9}><Icon name="addInd" /><Caret $m={3} /></ToolButton>
          <ToolButton $w={36} $start={7}><Icon name="clock" /><Caret $m={3} /></ToolButton>
          <ToolButton $w={38} $start={9}><Icon name="template" /><Caret $m={3} /></ToolButton>
        </ToolGroup>
        <RowEnd>
          <Icon name="search" />
          <Bubble>
            <Icon name="chat" />
            <Badge>1</Badge>
          </Bubble>
        </RowEnd>
      </ToolRow>

      <ToolRow $last>
        <ToolGroup $last>
          <Grip $w={10} />
          <ToolButton $w={23} $active><Icon name="cursor" /></ToolButton>
          {drawTools.map((t, i) => t
            ? <ToolButton key={i} $w={t[1]}><Icon name={t[0]} /></ToolButton>
            : <ToolSep key={i} $m={1} />)}
          <ToolButton $w={39} $start={4}><Icon name="arrows" /><Caret $m={6} /></ToolButton>
          <ToolSep $m={3} />
          {timeframes.map(tf => (
            <ToolButton key={tf} $active={tf === 'D1'}><TimeframeLabel>{tf}</TimeframeLabel></ToolButton>
          ))}
        </ToolGroup>
      </ToolRow>

      <ChartArea>
        <PaneRow $h={451}>
          <Pane>
            <BigSymbol>DOW_ecn D1</BigSymbol>
            <Watermark>Smart Trader Indonesia</Watermark>
            <BigPrice>29279.2</BigPrice>
            <PriceChart />
            <LegendCaret />
            <Legend $left={15}>{'DOW_ecn,Daily  29225.6 29611.9 28901.4 29279.2'}</Legend>
          </Pane>
          <Axis $pad={11}>
            {PRICE_TICKS.map((t, i) => <AxisTick key={t} $gap={i ? 19 : 0}>{t}</AxisTick>)}
            <PriceTag>29279.2</PriceTag>
          </Axis>
        </PaneRow>

        <PaneRow $h={70}>
          <Pane>
            <StiChart />
            <Legend>STI_OBOS -1166.9779 -1089.2707</Legend>
          </Pane>
          <Axis $pad={1}>
            <AxisTick $indent={3}>1250.3974</AxisTick>
            <AxisTick $gap={12}>0.00</AxisTick>
            <AxisTick $gap={15} $indent={3}>-1289.713</AxisTick>
          </Axis>
        </PaneRow>

        <PaneRow $h={114}>
          <SymbolPane>
            <PaneCaption>SymbolChanger1</PaneCaption>
            <SymbolGrid>
              {SYMBOLS.map((s, i) => (
                <SymbolButton key={i} $current={s === 'DOW_ecn'}>{s}</SymbolButton>
              ))}
            </SymbolGrid>
          </SymbolPane>
          <Axis>
            <AxisTick>0</AxisTick>
            <AxisTick $gap={86}>0</AxisTick>
          </Axis>
        </PaneRow>

        <PaneRow $h={206} $gap={0}>
          <Pane>
            <MacdChart />
            <Legend>MACD(24,52,9) -137.81 -696.25 -765.16</Legend>
          </Pane>
          <Axis>
            <AxisTick>517.93</AxisTick>
            <AxisTick $gap={55}>0.00</AxisTick>
            <AxisTick $gap={109}>-901.5</AxisTick>
          </Axis>
        </PaneRow>

        <TimeAxis>
          {DATES.map(d => <TimeLabel key={d}>{d}</TimeLabel>)}
        </TimeAxis>
      </ChartArea>

      <TabBar>
        <Tab $active $w={104} $pad={10}>DOW_ecn,Daily</Tab>
        <Tab $w={85} $pad={11}>BABA.,Daily</Tab>
        <Tab $w={87} $pad={10}>SP_ecn,Daily</Tab>
        <Tab $w={80} $pad={10}>PYPL.,Daily</Tab>
        <TabArrows>
          <Glyph width="5" height="8" viewBox="0 0 5 8"><path d="M5 0V8L0 4Z" fill="#808080" /></Glyph>
          <Glyph width="5" height="8" viewBox="0 0 5 8"><path d="M0 0V8L5 4Z" fill="#808080" /></Glyph>
        </TabArrows>
      </TabBar>

      <TradeBar>
        <TradeHandle>x<br />≡</TradeHandle>
        <TradeBox>
          <TradeDot />
          Saldo: 10 000.00 EUR  Profitto/Perdita: 0.00  Controvalore: 10 000.00  Margine disponibile: 10 000.00
        </TradeBox>
      </TradeBar>

      <StatusBar>
        <StatusHelp>Per aiuto, premi F1</StatusHelp>
        <StatusCell $w={115}>Default</StatusCell>
        <StatusCell $w={102} $tight>2022.06.29 00:00</StatusCell>
        <StatusCell $w={72}>O: 30976.0</StatusCell>
        <StatusCell $w={70}>H: 31157.3</StatusCell>
        <StatusCell $w={68}>L: 30879.3</StatusCell>
        <StatusCell $w={70}>C: 31034.8</StatusCell>
        <StatusCell $w={65}>V: 147382</StatusCell>
        <StatusCell $w={131}><Icon name="barsStatus" size={16} w={23} />100263/8 kb</StatusCell>
      </StatusBar>
    </Page>
  );
}
